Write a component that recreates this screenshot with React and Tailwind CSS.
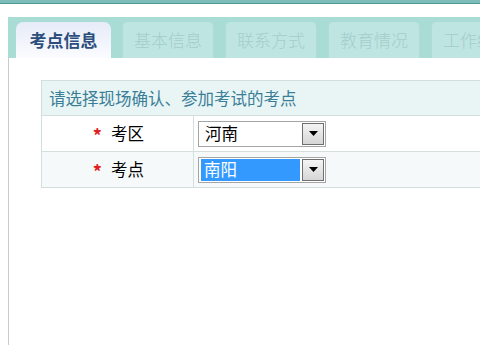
const tabs = ["考点信息", "基本信息", "联系方式", "教育情况", "工作经历"];

const Select = ({ value, selected }) => (
  <div className="flex h-[26px] w-[128px] border border-[#a5a5a5] bg-white p-[1px]">
    <div className="flex flex-1 items-center pl-[1px]">
      <span
        className={
          selected
            ? "flex h-full w-[99px] items-center bg-[#3399ff] px-[3px] text-white"
            : "px-[4px] text-black"
        }
      >
        {value}
      </span>
    </div>
    <div className="flex w-[22px] items-center justify-center border border-[#6f6f6f] bg-gradient-to-b from-[#f4f4f4] to-[#d6d6d6]">
      <svg width="9" height="5" viewBox="0 0 9 5">
        <path d="M0 0h9L4.5 5z" fill="#000" />
      </svg>
    </div>
  </div>
);

const Row = ({ label, children, shade }) => (
  <div className={`flex h-[36px] border-t border-[#d3dede] ${shade ? "bg-[#f6f9f9]" : "bg-white"}`}>
    <div className="flex w-[152px] items-center justify-end gap-[9px] border-r border-[#d3dede] pr-[49px] text-black">
      <span className="pt-[4px] text-[18px] font-bold text-[#e02020]">*</span>
      <span>{label}</span>
    </div>
    <div className="flex flex-1 items-center pl-[4px]">{children}</div>
  </div>
);

export default function App() {
  return (
    <div
      className="h-[345px] w-[480px] overflow-hidden bg-white text-[16.5px]"
      style={{ fontFamily: '"Noto Sans CJK SC", "Noto Sans", sans-serif' }}
    >
      <div className="h-[3px] bg-[#7dbcb8]" />
      <div className="h-[1px] bg-[#4f9a96]" />
      <div className="ml-[8px] mt-[13px] flex h-[41px] gap-[11px] bg-[#a9dcd5] pl-[8px] pt-[5px] text-[17px]">
        {tabs.map((t, i) =>
          i === 0 ? (
            <div
              key={t}
              className="flex w-[95px] shrink-0 items-center justify-center rounded-t-[7px] bg-gradient-to-b from-[#e6ebf8] to-[#fbfcff] font-bold text-[#2c4e7c]"
            >
              {t}
            </div>
          ) : (
            <div
              key={t}
              className="flex w-[92px] shrink-0 items-center justify-center rounded-t-[5px] border-x border-[#b0dcd8] bg-[#bfe5e2] font-light text-[#a3cdcc]"
            >
              {t}
            </div>
          )
        )}
      </div>
      <div className="ml-[8px] h-[300px] border-l border-[#c5cccc] pl-[32px] pt-[22px]">
        <div className="border-b border-l border-[#d3dede]">
          <div className="flex h-[35px] items-center border-t border-[#d3dede] bg-[#e9f5f5] pl-[7px] text-[#3b7e98]">
            请选择现场确认、参加考试的考点
          </div>
          <Row label="考区">
            <Select value="河南" />
          </Row>
          <Row label="考点" shade>
            <Select value="南阳" selected />
          </Row>
        </div>
      </div>
    </div>
  );
}
